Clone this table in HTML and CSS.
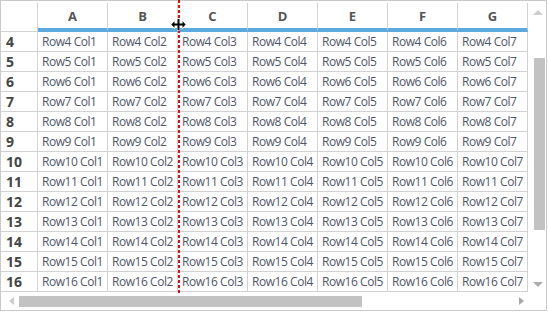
FILE: index.html
```html
<!DOCTYPE html>
<html lang="en">
<head>
  <meta charset="UTF-8">
  <title>Grid</title>
  <link rel="stylesheet" href="styles.css">
</head>
<body>
  <div class="grid-frame">
    <div class="grid-main">
      <!-- Cells -->
      <div class="viewport">
        <div class="sheet">
          <div class="corner-cell"></div>
          <div class="col-head">A</div>
          <div class="col-head">B</div>
          <div class="col-head">C</div>
          <div class="col-head">D</div>
          <div class="col-head">E</div>
          <div class="col-head">F</div>
          <div class="col-head">G</div>
        </div>
        <div class="sheet" id="rows"></div>
      </div>

      <!-- Vertical scrollbar -->
      <div class="vscroll">
        <span class="arrow arrow-up"></span>
        <div class="vthumb"></div>
        <span class="arrow arrow-down"></span>
      </div>
    </div>

    <!-- Horizontal scrollbar -->
    <div class="grid-foot">
      <div class="hscroll">
        <span class="arrow arrow-left"></span>
        <div class="hthumb"></div>
        <span class="arrow arrow-right"></span>
      </div>
      <div class="scroll-corner"></div>
    </div>

    <!-- Column resize guide -->
    <div class="resize-guide"></div>
    <svg class="resize-cursor" width="17" height="13" viewBox="0 0 17 13">
      <path d="M7 0.5h3v3.5h2v-2.5l4.5 5-4.5 5v-2.5h-2v3.5h-3v-3.5h-2v2.5l-4.5-5 4.5-5v2.5h2z" fill="#fff"/>
      <path d="M7.5 1h2v4.5h3v-2.3l3.2 3.3-3.2 3.3v-2.3h-3v4.5h-2v-4.5h-3v2.3l-3.2-3.3 3.2-3.3v2.3h3z" fill="#000"/>
    </svg>
  </div>

  <script>
    // Build the visible rows 4..16
    const rows = document.getElementById('rows');
    let html = '';
    for (let r = 4; r <= 16; r++) {
      html += '<div class="row-head">' + r + '</div>';
      for (let c = 1; c <= 7; c++) {
        html += '<div class="cell">Row' + r + ' Col' + c + '</div>';
      }
    }
    rows.innerHTML = html;
  </script>
</body>
</html>
```

FILE: styles.css
```css
/* Basic Styles */
body {
  margin: 0;
  padding: 0;
  background: #fff;
  font-family: "Open Sans", Arial, sans-serif;
}

.grid-frame {
  position: relative;
  width: 547px;
  height: 311px;
  box-sizing: border-box;
  border: 1px solid #c9c9c9;
  background: #fff;
}

.grid-main {
  display: flex;
  height: 291px;
}

.viewport {
  width: 527px;
  padding-top: 2px;
  box-sizing: border-box;
  overflow: hidden;
}

/* Cells */
.sheet {
  display: grid;
  grid-template-columns: 37px repeat(7, 70px);
}

.corner-cell,
.col-head,
.row-head,
.cell {
  box-sizing: border-box;
  border-right: 1px solid #d2d2d2;
  border-bottom: 1px solid #d2d2d2;
}

.corner-cell {
  height: 29px;
}

.col-head {
  height: 29px;
  border-bottom: 4px solid #5aaae0;
  display: flex;
  align-items: center;
  justify-content: center;
  padding-top: 1px;
  font-size: 13px;
  font-weight: bold;
  color: #555;
}

.row-head {
  height: 20px;
  display: flex;
  align-items: center;
  padding-left: 5px;
  font-size: 14px;
  font-weight: bold;
  color: #454545;
}

.cell {
  height: 20px;
  display: flex;
  align-items: center;
  padding-left: 4px;
  font-size: 12px;
  letter-spacing: -0.45px;
  color: #4f566a;
  white-space: nowrap;
  overflow: hidden;
}

/* Scrollbars */
.vscroll {
  width: 18px;
  display: flex;
  flex-direction: column;
  align-items: center;
}

.vthumb {
  width: 11px;
  height: 172px;
  margin: 43px 0 auto 4px;
  background: #c2c2c2;
}

.grid-foot {
  display: flex;
  height: 18px;
}

.hscroll {
  width: 527px;
  display: flex;
  align-items: center;
  padding-left: 8px;
  box-sizing: border-box;
}

.hthumb {
  width: 343px;
  height: 11px;
  margin: 0 auto 0 5px;
  background: #c2c2c2;
}

.scroll-corner {
  width: 18px;
}

.arrow {
  display: block;
  width: 0;
  height: 0;
}

.arrow-up {
  margin-top: 9px;
  margin-left: 1px;
  border-left: 5px solid transparent;
  border-right: 5px solid transparent;
  border-bottom: 5px solid #cccccc;
}

.arrow-down {
  margin-bottom: 5px;
  margin-left: 1px;
  border-left: 5px solid transparent;
  border-right: 5px solid transparent;
  border-top: 5px solid #adadad;
}

.arrow-left {
  border-top: 4px solid transparent;
  border-bottom: 4px solid transparent;
  border-right: 5px solid #cccccc;
}

.arrow-right {
  margin-right: 4px;
  border-top: 4px solid transparent;
  border-bottom: 4px solid transparent;
  border-left: 5px solid #a8a8a8;
}

/* Column resize guide */
.resize-guide {
  position: absolute;
  left: 177px;
  top: -1px;
  width: 2px;
  height: 293px;
  background: repeating-linear-gradient(#e0100f 0 3px, transparent 3px 5px);
}

.resize-cursor {
  position: absolute;
  left: 169px;
  top: 17px;
}
```
